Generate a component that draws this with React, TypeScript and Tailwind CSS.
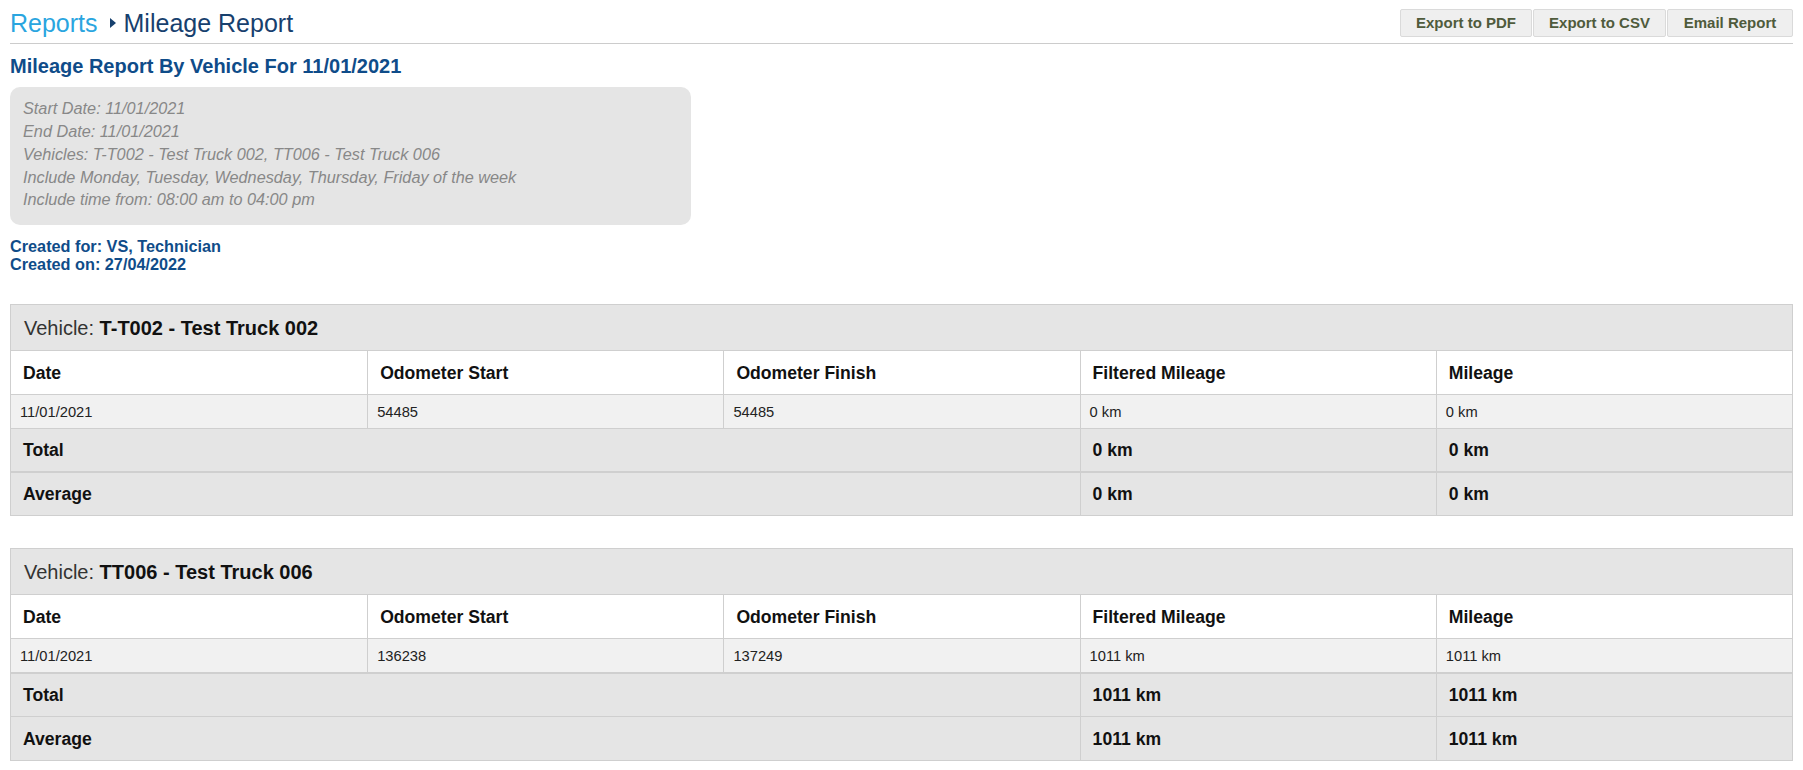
import React from "react";

type DayRow = { date: string; start: string; finish: string; filtered: string; mileage: string };

type VehicleReport = {
    code: string;
    name: string;
    rows: DayRow[];
    total: { filtered: string; mileage: string };
    average: { filtered: string; mileage: string };
    thickBeforeTotal: boolean;
};

const vehicles: VehicleReport[] = [
    {
        code: "T-T002",
        name: "Test Truck 002",
        rows: [{ date: "11/01/2021", start: "54485", finish: "54485", filtered: "0 km", mileage: "0 km" }],
        total: { filtered: "0 km", mileage: "0 km" },
        average: { filtered: "0 km", mileage: "0 km" },
        thickBeforeTotal: false,
    },
    {
        code: "TT006",
        name: "Test Truck 006",
        rows: [{ date: "11/01/2021", start: "136238", finish: "137249", filtered: "1011 km", mileage: "1011 km" }],
        total: { filtered: "1011 km", mileage: "1011 km" },
        average: { filtered: "1011 km", mileage: "1011 km" },
        thickBeforeTotal: true,
    },
];

const columns = ["Date", "Odometer Start", "Odometer Finish", "Filtered Mileage", "Mileage"];

function VehicleTable({ vehicle }: { vehicle: VehicleReport }) {
    return (
        <div className="border border-[#cfcfcf]">
            {/* Vehicle title */}
            <div className="h-[45px] flex items-center pl-[13px] bg-[#e5e5e5] text-[20px] text-[#333]">
                Vehicle:&nbsp;<span className="font-bold text-[#111]">{vehicle.code} - {vehicle.name}</span>
            </div>

            {/* Column headings */}
            <div className="grid grid-cols-5 h-[44px] border-t border-[#cfcfcf] bg-white">
                {columns.map((col, i) => (
                    <div
                        key={col}
                        className={`flex items-center pl-[12px] text-[17.6px] font-bold text-[#111] ${i > 0 ? "border-l border-[#cfcfcf]" : ""}`}
                    >
                        {col}
                    </div>
                ))}
            </div>

            {/* Day rows */}
            {vehicle.rows.map((row) => (
                <div key={row.date} className="grid grid-cols-5 h-[34px] border-t border-[#cfcfcf] bg-[#f1f1f1] text-[14.7px] text-[#222]">
                    <div className="flex items-center pl-[9px]">{row.date}</div>
                    <div className="flex items-center pl-[9px] border-l border-[#cfcfcf]">{row.start}</div>
                    <div className="flex items-center pl-[9px] border-l border-[#cfcfcf]">{row.finish}</div>
                    <div className="flex items-center pl-[9px] border-l border-[#cfcfcf]">{row.filtered}</div>
                    <div className="flex items-center pl-[9px] border-l border-[#cfcfcf]">{row.mileage}</div>
                </div>
            ))}

            {/* Total */}
            <div
                className={`grid grid-cols-5 bg-[#e5e5e5] text-[17.6px] font-bold text-[#111] border-[#cfcfcf] ${vehicle.thickBeforeTotal ? "h-[44px] border-t-2" : "h-[43px] border-t"}`}
            >
                <div className="col-span-3 flex items-center pl-[12px]">Total</div>
                <div className="flex items-center pl-[12px] border-l border-[#cfcfcf]">{vehicle.total.filtered}</div>
                <div className="flex items-center pl-[12px] border-l border-[#cfcfcf]">{vehicle.total.mileage}</div>
            </div>

            {/* Average */}
            <div
                className={`grid grid-cols-5 bg-[#e5e5e5] text-[17.6px] font-bold text-[#111] border-[#cfcfcf] ${vehicle.thickBeforeTotal ? "h-[44px] border-t" : "h-[44px] border-t-2"}`}
            >
                <div className="col-span-3 flex items-center pl-[12px]">Average</div>
                <div className="flex items-center pl-[12px] border-l border-[#cfcfcf]">{vehicle.average.filtered}</div>
                <div className="flex items-center pl-[12px] border-l border-[#cfcfcf]">{vehicle.average.mileage}</div>
            </div>
        </div>
    );
}

export default function App() {
    return (
        <div className="min-h-screen bg-white px-[10px] font-['Liberation_Sans',Arial,sans-serif]">
            {/* Header */}
            <div className="flex items-center justify-between pt-[9px] pb-[6px] border-b border-[#cccccc]">
                <div className="flex items-center text-[25px] leading-[28px]">
                    <span className="text-[#2aa5df]">Reports</span>
                    <svg width="6" height="10" viewBox="0 0 6 10" className="ml-[12px] mr-[8px]">
                        <path d="M0 0 L6 5 L0 10 Z" fill="#17406e" />
                    </svg>
                    <span className="text-[#17406e]">Mileage Report</span>
                </div>
                <div className="flex gap-px">
                    <button className="w-[132px] h-[28px] bg-[#efefef] border border-[#dadada] rounded-[2px] text-[15px] font-bold text-[#4f5b3c]">
                        Export to PDF
                    </button>
                    <button className="w-[133px] h-[28px] bg-[#efefef] border border-[#dadada] rounded-[2px] text-[15px] font-bold text-[#4f5b3c]">
                        Export to CSV
                    </button>
                    <button className="w-[126px] h-[28px] bg-[#efefef] border border-[#dadada] rounded-[2px] text-[15px] font-bold text-[#4f5b3c]">
                        Email Report
                    </button>
                </div>
            </div>

            {/* Title */}
            <h1 className="mt-[10px] text-[20px] leading-[24px] font-bold text-[#0f4c89]">
                Mileage Report By Vehicle For 11/01/2021
            </h1>

            {/* Criteria */}
            <div className="mt-[9px] w-[681px] rounded-[10px] bg-[#e5e5e5] pl-[13px] pt-[10px] pb-[14px] text-[16.25px] leading-[22.86px] italic text-[#888]">
                <div>Start Date: 11/01/2021</div>
                <div>End Date: 11/01/2021</div>
                <div>Vehicles: T-T002 - Test Truck 002, TT006 - Test Truck 006</div>
                <div>Include Monday, Tuesday, Wednesday, Thursday, Friday of the week</div>
                <div>Include time from: 08:00 am to 04:00 pm</div>
            </div>

            <div className="mt-[12px] text-[16.25px] leading-[18px] font-bold text-[#0f4c89]">
                <div>Created for: VS, Technician</div>
                <div>Created on: 27/04/2022</div>
            </div>

            {/* Vehicle tables */}
            <div className="mt-[31px] flex flex-col gap-[32px] pb-[10px]">
                {vehicles.map((v) => (
                    <VehicleTable key={v.code} vehicle={v} />
                ))}
            </div>
        </div>
    );
}
